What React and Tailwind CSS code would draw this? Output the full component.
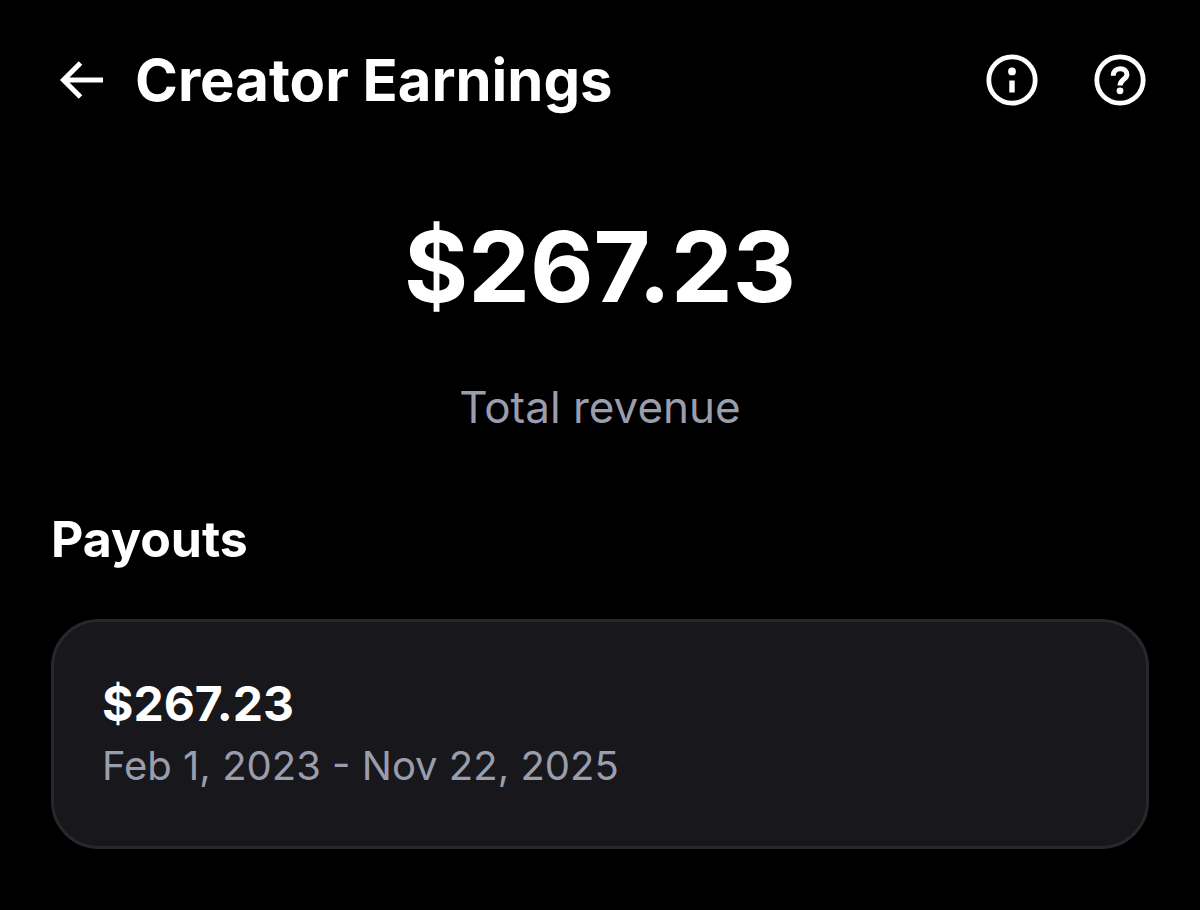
const payouts = [
  { id: 1, amount: "$267.23", period: "Feb 1, 2023 - Nov 22, 2025" },
];

const BackIcon = () => (
  <svg
    viewBox="0 0 44 38"
    className="h-[38px] w-11"
    fill="none"
    stroke="currentColor"
    strokeWidth="5"
    aria-hidden="true"
  >
    <path d="M21.5 2 L4.5 19 L21.5 36 M4.5 19 H44" />
  </svg>
);

const InfoIcon = () => (
  <svg viewBox="0 0 52 52" className="size-[52px]" fill="none" aria-hidden="true">
    <circle cx="26" cy="26" r="23.2" stroke="currentColor" strokeWidth="4.8" />
    <circle cx="26" cy="17.4" r="3.9" fill="currentColor" />
    <path d="M26 26.5 V38.5" stroke="currentColor" strokeWidth="5.4" />
  </svg>
);

const HelpIcon = () => (
  <svg viewBox="0 0 52 52" className="size-[52px]" fill="none" aria-hidden="true">
    <circle cx="26" cy="26" r="23.2" stroke="currentColor" strokeWidth="4.8" />
    <path
      d="M19.2 21.8 C19.2 17.4 22 14.8 26.2 14.8 C30.4 14.8 32.9 17.2 32.9 20.4 C32.9 25.4 26 25.2 26 31.6"
      stroke="currentColor"
      strokeWidth="5"
    />
    <circle cx="26" cy="36.8" r="3.4" fill="currentColor" />
  </svg>
);

const App = () => {
  return (
    <div className="min-h-screen bg-black px-[51px] pt-[47px] pb-[61px] font-['Inter',sans-serif] text-white">
      <header className="flex items-center justify-between pr-[3px] pl-2">
        <div className="flex items-center gap-8">
          <button aria-label="Back">
            <BackIcon />
          </button>
          <h1 className="text-[58px] leading-[66px] font-bold">Creator Earnings</h1>
        </div>
        <div className="flex items-center gap-14">
          <button aria-label="Information">
            <InfoIcon />
          </button>
          <button aria-label="Help">
            <HelpIcon />
          </button>
        </div>
      </header>

      <main>
        <section className="mt-[92px] flex flex-col items-center">
          <p className="text-[98px] leading-[124px] font-bold">$267.23</p>
          <p className="mt-12 text-[44px] leading-[60px] text-[#9a9dac]">Total revenue</p>
        </section>

        <section className="mt-[70px]">
          <h2 className="text-[50px] leading-[64px] font-bold">Payouts</h2>
          <ul className="mt-12">
            {payouts.map((payout) => (
              <li
                key={payout.id}
                className="rounded-[48px] border-3 border-[#28282b] bg-[#18181c] px-12 py-[50px]"
              >
                <p className="text-[48px] leading-[64px] font-bold">{payout.amount}</p>
                <p className="text-[40px] leading-[60px] text-[#9a9dac]">{payout.period}</p>
              </li>
            ))}
          </ul>
        </section>
      </main>
    </div>
  );
};

export default App;
